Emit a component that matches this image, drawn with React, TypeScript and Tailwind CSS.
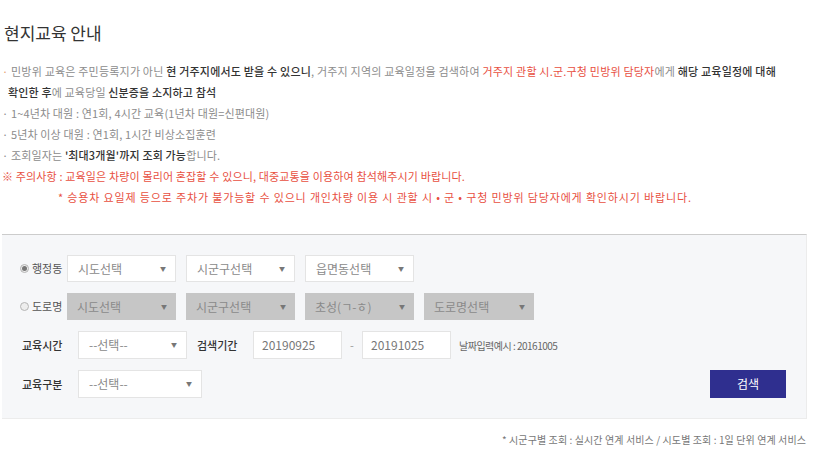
import React from "react";

const font = { fontFamily: '"Noto Sans CJK KR", "Noto Sans", sans-serif' };

function Arrow() {
  return <span className="text-[6px] text-[#777] leading-none">▼</span>;
}

function Select({ label, w, gray }: { label: string; w: string; gray?: boolean }) {
  return (
    <div
      className={`${w} h-[27px] flex items-center justify-between pl-[10px] pr-[9px] text-[12px] ${
        gray ? "bg-[#c6c6c6] text-[#8a8a8a]" : "bg-white border border-[#e4e4e4] text-[#8a8a8a]"
      }`}
    >
      <span>{label}</span>
      <Arrow />
    </div>
  );
}

function Radio({ checked }: { checked?: boolean }) {
  return (
    <span className="w-[9px] h-[9px] rounded-full border border-[#b5b5b5] bg-[#ededed] flex items-center justify-center">
      {checked && <span className="w-[5px] h-[5px] rounded-full bg-[#777]" />}
    </span>
  );
}

export default function App() {
  const g = "text-[#8c8c8c]";
  const d = "text-[#333] font-medium";
  const r = "text-[#e8503f]";
  return (
    <div className="w-[820px] h-[453px] bg-white overflow-hidden" style={font}>
      <div className="pl-[4px] pt-[21px] text-[17px] leading-[24px] text-[#333]">현지교육 안내</div>
      <div className="mt-[16px] pl-[2px] text-[11px] leading-[21px] tracking-[0.15px]">
        <div className={`${g} tracking-[0.2px]`}>
          <span className="text-[#e8a070]">·</span> 민방위 교육은 주민등록지가 아닌 <span className={d}>현 거주지에서도 받을 수 있으니</span>, 거주지 지역의 교육일정을 검색하여{" "}
          <span className={r}>거주지 관할 시.군.구청 민방위 담당자</span>에게 <span className={d}>해당 교육일정에 대해</span>
        </div>
        <div className={`${g} pl-[6px]`}>
          <span className={d}>확인한 후</span>에 교육당일 <span className={d}>신분증을 소지하고 참석</span>
        </div>
        <div className={g}>· 1~4년차 대원 : 연1회, 4시간 교육(1년차 대원=신편대원)</div>
        <div className={g}>· 5년차 이상 대원 : 연1회, 1시간 비상소집훈련</div>
        <div className={g}>
          · 조회일자는 <span className={d}>'최대3개월'까지 조회 가능</span>합니다.
        </div>
        <div className={r}>※ 주의사항 : 교육일은 차량이 몰리어 혼잡할 수 있으니, 대중교통을 이용하여 참석해주시기 바랍니다.</div>
        <div className={`${r} pl-[56px] tracking-[0.85px]`}>
          * 승용차 요일제 등으로 주차가 불가능할 수 있으니 개인차량 이용 시 관할 시 • 군 • 구청 민방위 담당자에게 확인하시기 바랍니다.
        </div>
      </div>

      <div className="mt-[26px] ml-[2px] w-[805px] bg-[#f6f7f9] border-t border-[#cccccc] border-r border-b border-r-[#ececec] border-b-[#ececec] pl-[18px] pr-[20px] pt-[20px] pb-[20px] flex flex-col gap-[11px]">
        <div className="flex items-center h-[27px]">
          <div className="w-[47px] flex items-center gap-[3px] text-[11px] text-[#555]">
            <Radio checked />
            <span>행정동</span>
          </div>
          <div className="flex gap-[10px]">
            <Select label="시도선택" w="w-[109px]" />
            <Select label="시군구선택" w="w-[109px]" />
            <Select label="읍면동선택" w="w-[109px]" />
          </div>
        </div>
        <div className="flex items-center h-[27px]">
          <div className="w-[47px] flex items-center gap-[3px] text-[11px] text-[#555]">
            <Radio />
            <span>도로명</span>
          </div>
          <div className="flex gap-[10px]">
            <Select label="시도선택" w="w-[109px]" gray />
            <Select label="시군구선택" w="w-[109px]" gray />
            <Select label="초성(ㄱ-ㅎ)" w="w-[109px]" gray />
            <Select label="도로명선택" w="w-[110px]" gray />
          </div>
        </div>
        <div className="flex items-center h-[28px]">
          <div className="w-[58px] pl-[2px] text-[11px] text-[#333] font-medium">교육시간</div>
          <Select label="--선택--" w="w-[109px] !h-[28px]" />
          <div className="ml-[10px] w-[56px] text-[11px] text-[#333] font-medium">검색기간</div>
          <div className="w-[89px] h-[28px] bg-white border border-[#e4e4e4] flex items-center pl-[8px] text-[12px] text-[#777]">20190925</div>
          <div className="w-[20px] text-center text-[11px] text-[#999]">-</div>
          <div className="w-[89px] h-[28px] bg-white border border-[#e4e4e4] flex items-center pl-[8px] text-[12px] text-[#777]">20191025</div>
          <div className="ml-[8px] text-[10px] text-[#666] tracking-[-0.5px]">날짜입력예시 : 20161005</div>
        </div>
        <div className="flex items-center h-[28px]">
          <div className="w-[58px] pl-[2px] text-[11px] text-[#333] font-medium">교육구분</div>
          <Select label="--선택--" w="w-[124px] !h-[28px]" />
          <div className="ml-auto mr-[0px] w-[76px] h-[28px] bg-[#2f2f8f] text-white text-[12px] flex items-center justify-center">검색</div>
        </div>
      </div>

      <div className="w-[806px] mt-[13px] text-right text-[10px] text-[#777] tracking-[0.1px]">
        * 시군구별 조회 : 실시간 연계 서비스 / 시도별 조회 : 1일 단위 연계 서비스
      </div>
    </div>
  );
}
